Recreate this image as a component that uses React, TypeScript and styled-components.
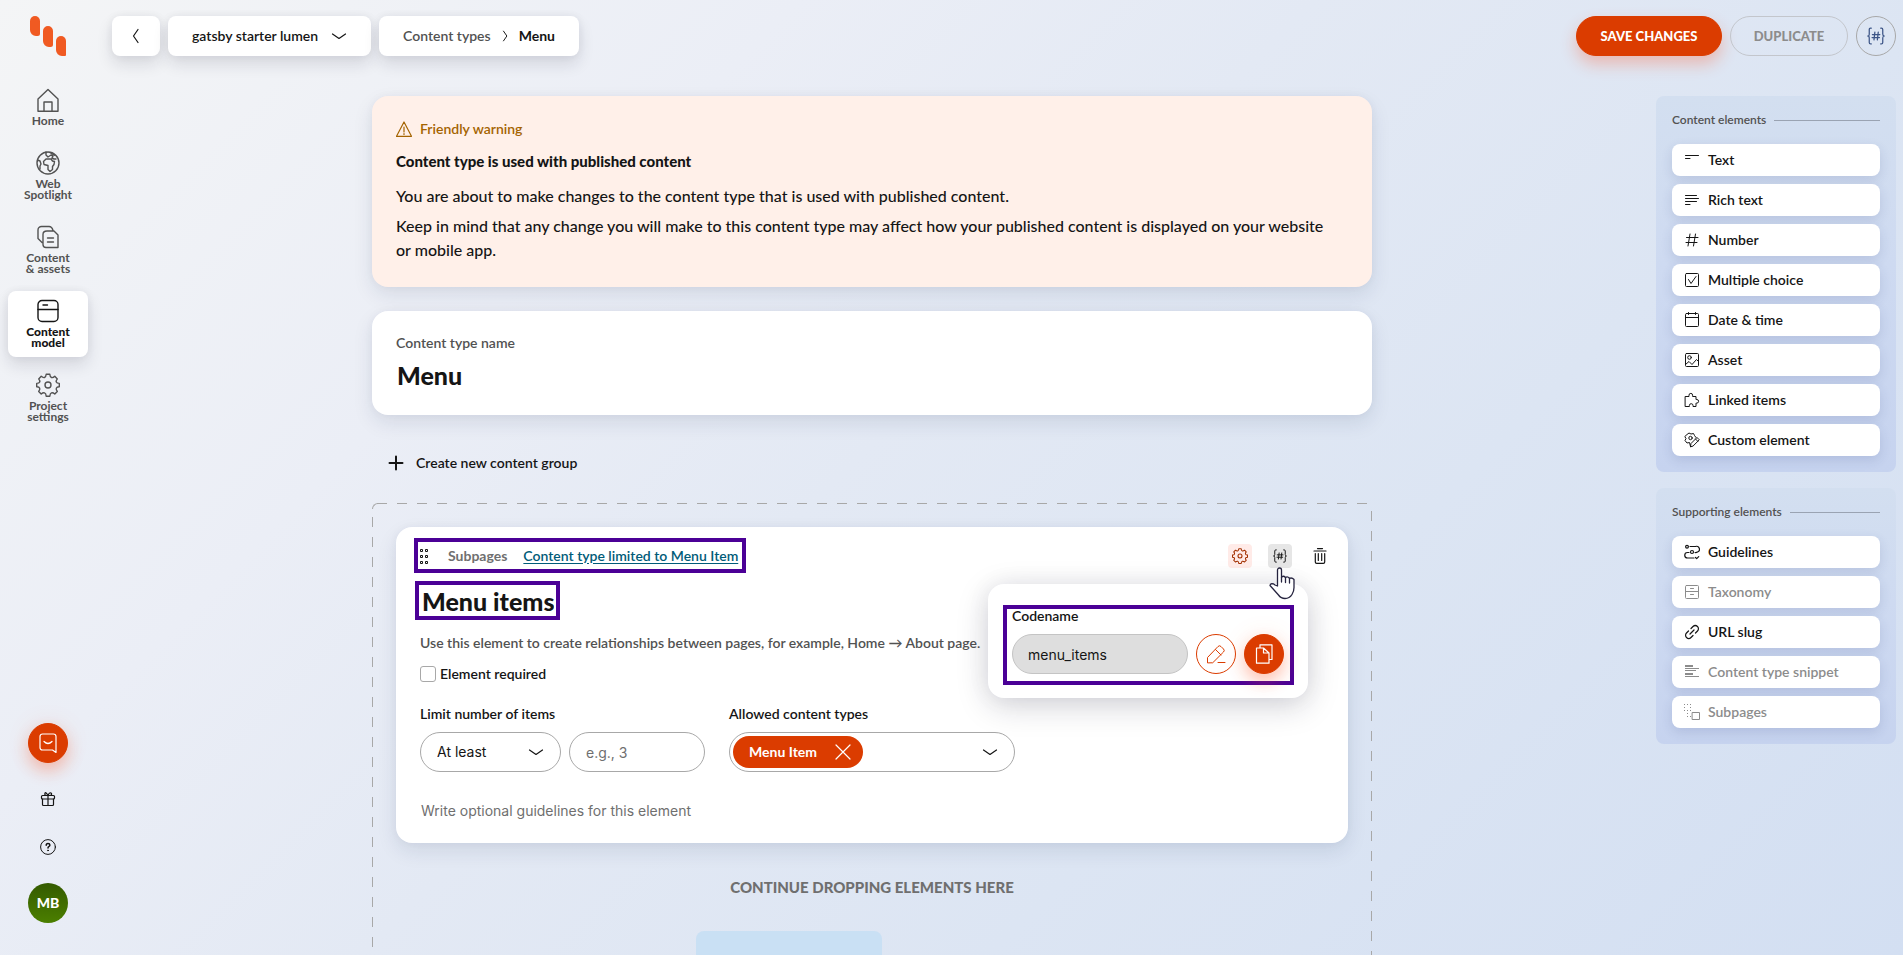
import React from 'react';
import styled, { createGlobalStyle, css } from 'styled-components';

const brand = "Lato, 'Liberation Sans', sans-serif";
const plain = "Inter, 'Liberation Sans', sans-serif";
const ink = '#151515';
const muted = '#525252';
const faint = '#8c8c8c';
const orange = '#db3c00';
const line = '#a8a8a8';
const purple = '#4b0096';

const GlobalStyle = createGlobalStyle`
  *, *::before, *::after { box-sizing: border-box; }
  body { margin: 0; color: ${ink}; font: 600 14px/20px ${brand}; }
  h1, h2, p, ul { margin: 0; padding: 0; }
  ul { list-style: none; }
  button, input, select, textarea { font: inherit; color: inherit; margin: 0; }
  button { cursor: pointer; }
  svg { display: block; flex: none; }
`;

const Page = styled.div`
  display: flex;
  height: 100vh;
  overflow: hidden;
  background: linear-gradient(135deg, #f4f5f6 0%, #ebeef6 28%, #e3e9f4 46%, #dce5f3 68%, #d3dff2 100%);
`;

const Sidebar = styled.nav`
  display: flex;
  flex-direction: column;
  flex: none;
  align-items: center;
  width: 96px;
  padding: 16px 8px 32px;
`;

const NavList = styled.ul`
  display: flex;
  flex-direction: column;
  gap: 8px;
  width: 80px;
  margin: 24px 0 auto;
`;

const NavLink = styled.a<{ $active?: boolean }>`
  display: flex;
  flex-direction: column;
  align-items: center;
  gap: 3px;
  padding: 8px 4px 9px;
  border-radius: 8px;
  color: ${(p) => (p.$active ? ink : muted)};
  font-size: 12px;
  font-weight: ${(p) => (p.$active ? 900 : 700)};
  line-height: 11px;
  text-align: center;
  text-decoration: none;
  white-space: pre-line;
  ${(p) =>
    p.$active &&
    css`
      background: #fff;
      box-shadow: 0 8px 16px rgba(21, 21, 50, 0.12), 0 0 8px rgba(21, 21, 50, 0.06);
    `}
`;

const SideTools = styled.div`
  display: flex;
  flex-direction: column;
  align-items: center;
  gap: 8px;
`;

const RoundButton = styled.button<{ $tone?: 'solid' | 'outline' | 'ghost' | 'code' }>`
  display: flex;
  flex: none;
  align-items: center;
  justify-content: center;
  width: 40px;
  height: 40px;
  padding: 0;
  border: 1px solid transparent;
  border-radius: 20px;
  background: none;
  ${(p) =>
    p.$tone === 'solid' &&
    css`
      border-color: ${orange};
      background: ${orange};
      color: #fff;
      box-shadow: 0 8px 16px rgba(255, 80, 30, 0.3), 0 0 24px rgba(255, 120, 60, 0.1);
    `}
  ${(p) =>
    p.$tone === 'outline' &&
    css`
      border-color: ${orange};
      color: ${orange};
      background: #fff;
    `}
  ${(p) =>
    p.$tone === 'code' &&
    css`
      border-color: ${line};
      color: #3b5486;
    `}
`;

const Avatar = styled.button`
  width: 40px;
  height: 40px;
  margin-top: 8px;
  padding: 0;
  border: 0;
  border-radius: 20px;
  background: linear-gradient(#345a00, #4b7f00);
  color: #fff;
  font-weight: 900;
`;

const ChatSlot = styled.div`
  margin-bottom: 8px;
`;

const Body = styled.div`
  display: flex;
  flex: 1;
  flex-direction: column;
  min-width: 0;
`;

const Header = styled.header`
  display: flex;
  flex: none;
  gap: 8px;
  align-items: center;
  padding: 16px 7px 16px 16px;
`;

const chip = css`
  display: flex;
  align-items: center;
  height: 40px;
  border: 0;
  border-radius: 8px;
  background: #fff;
  box-shadow: 0 8px 16px rgba(21, 21, 50, 0.12), 0 0 8px rgba(21, 21, 50, 0.06);
`;

const BackButton = styled.button`
  ${chip}
  justify-content: center;
  width: 48px;
  padding: 0;
`;

const ProjectButton = styled.button`
  ${chip}
  justify-content: space-between;
  min-width: 203px;
  padding: 0 24px;
`;

const Breadcrumbs = styled.nav`
  ${chip}
  justify-content: space-between;
  min-width: 200px;
  margin-right: auto;
  padding: 0 24px;
  a { color: ${muted}; text-decoration: none; }
  span { font-weight: 700; }
`;

const PillButton = styled.button<{ $primary?: boolean }>`
  height: 40px;
  min-width: ${(p) => (p.$primary ? 146 : 118)}px;
  padding: 0 16px;
  border: 1px solid ${(p) => (p.$primary ? orange : '#c3c6cc')};
  border-radius: 20px;
  background: ${(p) => (p.$primary ? orange : 'transparent')};
  color: ${(p) => (p.$primary ? '#fff' : faint)};
  font-size: 13px;
  font-weight: 900;
  text-transform: uppercase;
  box-shadow: ${(p) => (p.$primary ? '0 8px 16px rgba(255, 80, 30, 0.3)' : 'none')};
`;

const Columns = styled.div`
  display: flex;
  flex: 1;
  min-height: 0;
`;

const Main = styled.main`
  display: flex;
  flex: 1;
  align-items: flex-start;
  justify-content: center;
  min-width: 0;
  padding: 24px 16px 0;
  overflow: hidden auto;
  scrollbar-width: none;
`;

const Content = styled.div`
  display: flex;
  flex: 0 1 1000px;
  flex-direction: column;
  min-width: 0;
`;

const cardShadow = '0 8px 20px rgba(21, 35, 80, 0.1), 0 0 8px rgba(21, 35, 80, 0.04)';

const Warning = styled.section`
  display: flex;
  flex-direction: column;
  padding: 23px 24px 25px;
  border-radius: 16px;
  background: #fff0e9;
  box-shadow: ${cardShadow};
`;

const WarningHead = styled.div`
  display: flex;
  gap: 8px;
  align-items: center;
  color: #a46300;
`;

const WarningTitle = styled.h2`
  margin: 10px 0 11px;
  font-size: 15px;
  font-weight: 900;
  line-height: 24px;
`;

const WarningText = styled.p`
  padding-right: 12px;
  font-size: 16px;
  font-weight: 500;
  line-height: 24px;
  & + & { margin-top: 6px; }
`;

const NameCard = styled.section`
  display: flex;
  flex-direction: column;
  gap: 8px;
  margin-top: 24px;
  padding: 24px;
  border-radius: 16px;
  background: #fff;
  box-shadow: ${cardShadow};
`;

const Label = styled.label<{ $muted?: boolean }>`
  color: ${(p) => (p.$muted ? muted : ink)};
  line-height: 16px;
`;

const TitleInput = styled.input`
  width: 100%;
  height: 32px;
  padding: 0 1px;
  border: 0;
  outline: 0;
  background: none;
  font-size: 25px;
  font-weight: 900;
  line-height: 32px;
`;

const FittedTitle = styled(TitleInput)`
  width: auto;
  height: 31px;
  padding: 0;
  field-sizing: content;
`;

const GroupButton = styled.button`
  display: flex;
  gap: 12px;
  align-items: center;
  align-self: flex-start;
  height: 40px;
  margin: 28px 0 20px;
  padding: 0 16px;
  border: 0;
  background: none;
`;

const dash = (dir: string) =>
  `repeating-linear-gradient(${dir}, ${line} 0 10px, transparent 10px 20px)`;

const DropZone = styled.section`
  position: relative;
  display: flex;
  flex-direction: column;
  align-items: center;
  padding: 24px 24px 0;
  background:
    ${dash('to right')} 5px 0 / 100% 1px no-repeat,
    ${dash('to bottom')} 0 14px / 1px 100% no-repeat,
    ${dash('to bottom')} 100% 8px / 1px 100% no-repeat;
  &::before {
    content: '';
    position: absolute;
    top: 0;
    left: 0;
    width: 6px;
    height: 6px;
    border: solid ${line};
    border-width: 1px 0 0 1px;
    border-radius: 6px 0 0 0;
  }
`;

const ElementCard = styled.article`
  display: flex;
  flex-direction: column;
  align-items: flex-start;
  align-self: stretch;
  padding: 11px 16px 22px 24px;
  border-radius: 16px;
  background: #fff;
  box-shadow: ${cardShadow};
`;

const CardTop = styled.div`
  display: flex;
  align-items: center;
  justify-content: space-between;
  align-self: stretch;
`;

const Highlight = styled.div<{ $shift: number; $pad: string }>`
  display: flex;
  align-items: center;
  margin-left: -${(p) => p.$shift}px;
  padding: ${(p) => p.$pad};
  border: 4px solid ${purple};
`;

const TitleRow = styled.div`
  display: flex;
  margin-top: 8px;
`;

const DragHandle = styled.button`
  display: flex;
  align-items: center;
  height: 27px;
  margin-right: 20px;
  padding: 0;
  border: 0;
  background: none;
  cursor: grab;
`;

const KindName = styled.span`
  margin-right: 16px;
  color: #6f6f6f;
  font-weight: 700;
`;

const LimitLink = styled.a`
  color: #005b78;
  text-underline-offset: 2px;
`;

const Actions = styled.div`
  display: flex;
  gap: 16px;
`;

const ActionSlot = styled.div`
  position: relative;
`;

const ActionButton = styled.button<{ $bg?: string; $color?: string }>`
  display: flex;
  align-items: center;
  justify-content: center;
  width: 24px;
  height: 24px;
  padding: 0;
  border: 0;
  border-radius: 4px;
  background: ${(p) => p.$bg ?? 'none'};
  color: ${(p) => p.$color ?? ink};
`;

const Pointer = styled.svg`
  position: absolute;
  z-index: 3;
  top: 23px;
  left: 1px;
`;

const Popup = styled.div`
  position: absolute;
  z-index: 2;
  top: 40px;
  right: -16px;
  width: 320px;
  padding: 21px 14px 13px 15px;
  border-radius: 16px;
  background: #fff;
  box-shadow: 0 8px 32px rgba(21, 21, 50, 0.18), 0 0 24px rgba(21, 21, 50, 0.06);
`;

const PopupFrame = styled.div`
  display: flex;
  flex-direction: column;
  gap: 11px;
  padding: 0 6px 7px 5px;
  border: 4px solid ${purple};
  label { line-height: 14px; }
`;

const PopupRow = styled.div`
  display: flex;
  gap: 8px;
`;

const CodeInput = styled.input`
  flex: 1;
  min-width: 0;
  height: 40px;
  padding: 2px 15px 0;
  border: 1px solid #c4c4c4;
  border-radius: 20px;
  outline: 0;
  background: #dedede;
  font-family: ${plain};
  font-weight: 400;
`;

const HintText = styled.p`
  margin: 13px 0;
  color: ${muted};
`;

const CheckLabel = styled.label`
  display: flex;
  gap: 4px;
  align-items: center;
  height: 16px;
  input {
    width: 16px;
    height: 16px;
    border: 1px solid ${line};
    border-radius: 3px;
    background: #fff;
    appearance: none;
  }
`;

const Fields = styled.div`
  display: flex;
  gap: 24px;
  margin: 24px 0 29px;
`;

const Field = styled.div`
  display: flex;
  flex-direction: column;
  gap: 10px;
`;

const FieldRow = styled.div`
  display: flex;
  gap: 8px;
`;

const box = css`
  height: 40px;
  border: 1px solid ${line};
  border-radius: 20px;
  outline: 0;
  background: #fff;
`;

const SelectBox = styled.div`
  position: relative;
  svg { position: absolute; top: 12px; right: 17px; pointer-events: none; }
  select {
    ${box}
    width: 141px;
    padding: 0 40px 0 16px;
    font-family: ${plain};
    font-weight: 400;
    appearance: none;
  }
`;

const NumberInput = styled.input`
  ${box}
  width: 136px;
  padding: 0 16px;
  font-family: ${plain};
  font-weight: 400;
  &::placeholder { color: #6f6f6f; }
`;

const MultiSelect = styled.div`
  ${box}
  display: flex;
  align-items: center;
  justify-content: space-between;
  width: 286px;
  padding: 0 16px 0 3px;
`;

const Tag = styled.span`
  display: flex;
  align-items: center;
  justify-content: space-between;
  width: 130px;
  height: 32px;
  padding: 0 12px 0 16px;
  border-radius: 16px;
  background: ${orange};
  color: #fff;
  font-weight: 700;
`;

const IconButton = styled.button`
  display: flex;
  padding: 0;
  border: 0;
  background: none;
`;

const Guidelines = styled.textarea`
  align-self: stretch;
  height: 20px;
  padding: 0 1px;
  border: 0;
  outline: 0;
  background: none;
  font-family: ${plain};
  font-weight: 400;
  resize: none;
  overflow: hidden;
  &::placeholder { color: #6f6f6f; }
`;

const DropHint = styled.p`
  margin: 34px 0;
  color: #6f6f6f;
  font-size: 15px;
  font-weight: 900;
  text-transform: uppercase;
`;

const DropTargets = styled.div`
  display: grid;
  grid-template-columns: 186px 166px;
`;

const DropTarget = styled.div`
  height: 120px;
  border-radius: 8px;
  background: #c9e0f4;
`;

const Aside = styled.aside`
  display: flex;
  flex: none;
  flex-direction: column;
  gap: 16px;
  width: 255px;
  padding: 24px 7px 0 8px;
`;

const Panel = styled.section`
  display: flex;
  flex-direction: column;
  gap: 16px;
  padding: 16px;
  border-radius: 8px;
  background: linear-gradient(#d3dff0, #cedaf1 45%, #c6d3ef);
`;

const PanelTitle = styled.h2`
  display: flex;
  gap: 8px;
  align-items: center;
  color: ${muted};
  font-size: 12px;
  font-weight: 600;
  line-height: 16px;
  &::after { content: ''; flex: 1; height: 1px; background: #9aa3b2; }
`;

const PanelList = styled.ul`
  display: flex;
  flex-direction: column;
  gap: 8px;
`;

const PaletteButton = styled.button`
  display: flex;
  gap: 8px;
  align-items: center;
  width: 100%;
  height: 32px;
  padding: 0 12px;
  border: 0;
  border-radius: 8px;
  background: #fff;
  box-shadow: 0 4px 12px rgba(40, 60, 120, 0.14);
  &:disabled { color: ${faint}; }
`;

type Glyph = { d?: string; fill?: string; size?: number; box?: number; weight?: number; children?: React.ReactNode };

const Icon = ({ d, fill, size = 16, box: vb = 16, weight = 1, children }: Glyph) => (
  <svg
    width={size}
    height={size}
    viewBox={`0 0 ${vb} ${vb}`}
    fill="none"
    stroke="currentColor"
    strokeWidth={weight}
    strokeLinecap="round"
    strokeLinejoin="round"
    aria-hidden="true"
  >
    {d && <path d={d} />}
    {fill && <path d={fill} fill="currentColor" stroke="none" />}
    {children}
  </svg>
);

const gearPath =
  'M10.2 1.200h3.600q.2 2.800 1.700 3.300t3.300-1.200l2.500 2.600q-1.500 1.900-1 3.200t3 1.300v3.400q-2.500.1-3 1.400t1 3.200l-2.500 2.600q-1.900-1.600-3.300-1.100t-1.700 3.300h-3.600q-.2-2.800-1.700-3.300t-3.300 1.100l-2.500-2.600q1.500-1.900 1-3.200t-3-1.400v-3.400q2.500 0 3-1.300t-1-3.200l2.500-2.600q1.900 1.700 3.300 1.200t1.700-3.300z';

const Gear = ({ size = 24, weight = 1.4 }: { size?: number; weight?: number }) => (
  <Icon size={size} box={24} weight={weight} d={gearPath}>
    <circle cx="12" cy="12" r="3" />
  </Icon>
);

const Braces = ({ size = 16 }: { size?: number }) => (
  <Icon
    size={size}
    weight={1.1}
    d="M3.8 1h-.6q-1.2 0-1.2 1.3v4Q2 8 .6 8 2 8 2 9.700v4Q2 15 3.200 15h.6M12.200 1h.6q1.200 0 1.200 1.300v4Q14 8 15.400 8 14 8 14 9.700v4q0 1.300-1.200 1.300h-.6M7 4.500l-.8 7M10 4.500l-.8 7M4.800 6.700h6.600M4.500 9.400h6.600"
  />
);

const Chevron = () => <Icon d="M1.500 6 8 10.500 14.500 6" weight={1.200} />;

const Logo = () => (
  <svg width="36" height="40" viewBox="0 0 36 40" fill="#f05a22" role="img" aria-label="Kontent">
    <path d="M0 5a5 5 0 0 1 10 0v12.500a2.500 2.500 0 0 1-2.500 2.500H6a6 6 0 0 1-6-6z" />
    <path d="M13 15a5 5 0 0 1 10 0v13.500a2.500 2.500 0 0 1-2.500 2.500H19a6 6 0 0 1-6-6z" />
    <path d="M26 25a5 5 0 0 1 10 0v14a1 1 0 0 1-1 1h-3a6 6 0 0 1-6-6z" />
  </svg>
);

const navItems = [
  {
    label: 'Home',
    icon: <Icon size={24} box={24} weight={1.400} d="M2 23.200V11L12 1.500 22 11v12.200zM8 23.200V14h8v9.200" />,
  },
  {
    label: 'Web\nSpotlight',
    icon: (
      <Icon
        size={24}
        box={24}
        weight={1.400}
        d="M10 1v3l2 2 3-2 2 1-1 2 2 1h2M1.500 9l2.500 1 1 3-1 2v3M10 8h5l1.500 2 2 .5-.5 3-1.500 2v3L14 20.500l-2-2v-4l-4-1-.5-3zM14 1.500l5 3"
      >
        <circle cx="12" cy="12" r="11" />
      </Icon>
    ),
  },
  {
    label: 'Content\n& assets',
    icon: (
      <Icon
        size={24}
        box={24}
        weight={1.400}
        d="M7 17.500H6l-4-4V5a3.500 3.500 0 0 1 3.500-3.500H13q3 0 4 4M11 6h7l4 4v12.500H10a3 3 0 0 1-3-3V9.500Q7 6 11 6zM11.500 13h6M11.500 17h6"
      />
    ),
  },
  {
    label: 'Content\nmodel',
    active: true,
    icon: (
      <Icon size={24} box={24} weight={1.400} d="M2 10.500h20M7 6h4.500">
        <rect x="2" y="1.500" width="20" height="21" rx="4" />
      </Icon>
    ),
  },
  { label: 'Project\nsettings', icon: <Gear /> },
];

const contentElements = [
  { label: 'Text', icon: <Icon d="M1.500 3.500h13M1.500 6.500h4.500" /> },
  { label: 'Rich text', icon: <Icon d="M1.500 3.500h11M1.500 6.500h13M1.500 9.500h11M1.500 12.500h4.500" /> },
  { label: 'Number', icon: <Icon d="M6 2 4 14M11.500 2l-2 12M2.500 5.500h11.500M2 10.500h11" /> },
  {
    label: 'Multiple choice',
    icon: (
      <Icon d="M4.500 7.500 7 11.500 12 4.500">
        <rect x="1.500" y="1.500" width="13" height="13" rx="1" />
      </Icon>
    ),
  },
  {
    label: 'Date & time',
    icon: (
      <Icon d="M1.500 5.500h13M4.500 .5v2M11.500 .5v2">
        <rect x="1.500" y="1.500" width="13" height="13" rx="1" />
      </Icon>
    ),
  },
  {
    label: 'Asset',
    icon: (
      <Icon d="M1.500 12.500 5 9.500l3 3 4.500-5 2 2">
        <rect x="1.500" y="1.500" width="13" height="13" rx="1" />
        <circle cx="5.500" cy="5.500" r="1.800" />
      </Icon>
    ),
  },
  {
    label: 'Linked items',
    icon: (
      <Icon d="M1.500 4.500H5V3.200a1.800 1.800 0 0 1 3.600 0v1.300H12V7.500h.8a1.800 1.800 0 0 1 0 3.600H12v3.400H9v-1a1.800 1.800 0 0 0-3.600 0v1H1.500z" />
    ),
  },
  {
    label: 'Custom element',
    icon: (
      <Icon d="M6.500 14.500 5.500 10.500 3 11 1 8.500 2 6.500.8 4.500 3 2.500 5 1l2 1 2.500-.5 1 2L12 5.500M6.500 14.500 7 11.500 13 5.500l2.300 2.300-6 6zM11.500 7l2.300 2.300">
        <circle cx="6.500" cy="6" r="1.700" />
      </Icon>
    ),
  },
];

const supportingElements = [
  {
    label: 'Guidelines',
    icon: (
      <Icon weight={1.200} d="M6 2.500h5.500a2.700 2.700 0 0 1 2 5.500q-1 .7-2.500.5M5 8.500H3.500a2.500 2.500 0 0 0 0 5.500H10M11.500 13.500l1.200 1.200 2-2">
        <circle cx="3" cy="2.800" r="1.400" />
        <circle cx="8" cy="8" r="1.500" />
      </Icon>
    ),
  },
  {
    label: 'Taxonomy',
    off: true,
    icon: (
      <Icon d="M1.500 7.500h13M6.500 4.500h3M6.500 10.500h3">
        <rect x="1.500" y="1.500" width="13" height="13" rx="1" />
      </Icon>
    ),
  },
  {
    label: 'URL slug',
    icon: (
      <Icon weight={1.200} d="M6 10l4-4M7 4.500 9 2.500a3 3 0 0 1 4.500 4.500L11.500 9M9 11.500l-2 2A3 3 0 0 1 2.500 9L4.500 7" />
    ),
  },
  {
    label: 'Content type snippet',
    off: true,
    icon: <Icon fill="M1 1h8v2H1zM1 4h14v1H1zM1 6h11v1H1zM1 9h8v2H1zM1 12h14v1H1z" />,
  },
  {
    label: 'Subpages',
    off: true,
    icon: (
      <Icon fill="M0 0h1v1H0zM3 0h1v1H3zM6 0h1v1H6zM0 3h1v1H0zM6 3h1v1H6zM0 6h1v1H0zM3 6h1v1H3zM6 6h1v1H6zM3 9h1v1H3zM6 12h1v1H6zM3 12h1v1H3z">
        <rect x="8.500" y="8.500" width="7" height="7" />
      </Icon>
    ),
  },
];

type Item = { label: string; icon: React.ReactNode; off?: boolean };

const Palette = ({ title, items }: { title: string; items: Item[] }) => (
  <Panel>
    <PanelTitle>{title}</PanelTitle>
    <PanelList>
      {items.map((item) => (
        <li key={item.label}>
          <PaletteButton disabled={item.off}>
            {item.icon}
            {item.label}
          </PaletteButton>
        </li>
      ))}
    </PanelList>
  </Panel>
);

const App = () => (
  <>
    <GlobalStyle />
    <Page>
      <Sidebar aria-label="Main">
        <Logo />
        <NavList>
          {navItems.map((item) => (
            <li key={item.label}>
              <NavLink href="#" $active={item.active}>
                {item.icon}
                {item.label}
              </NavLink>
            </li>
          ))}
        </NavList>
        <SideTools>
          <ChatSlot>
            <RoundButton $tone="solid" aria-label="Chat">
              <Icon size={20} box={20} weight={1.200} d="M18 19.500 14.500 17H4.500a2.500 2.500 0 0 1-2.500-2.500v-11A2.500 2.500 0 0 1 4.500 1h11A2.500 2.500 0 0 1 18 3.500zM6 8.500q4 4 8 0" />
            </RoundButton>
          </ChatSlot>
          <RoundButton aria-label="What's new">
            <Icon weight={1.200} d="M2.500 8v5.500q0 1 1 1h9q1 0 1-1V8M8 4.500v10M8 4.500H5.500Q4.300 3.200 5 2T8 4.500Q9.500 1 11 2t-.5 2.500z">
              <rect x="1.500" y="4.500" width="13" height="3.500" rx="1" />
            </Icon>
          </RoundButton>
          <RoundButton aria-label="Help">
            <Icon d="M6.200 6.300q0-1.900 1.800-1.900t1.900 1.700q0 1-1.100 1.500-.8.400-.8 1.300" weight={1.500}>
              <circle cx="8" cy="8" r="7.400" strokeWidth="1" />
              <circle cx="8" cy="11.400" r=".5" fill="currentColor" strokeWidth=".8" />
            </Icon>
          </RoundButton>
          <Avatar>MB</Avatar>
        </SideTools>
      </Sidebar>
      <Body>
        <Header>
          <BackButton aria-label="Back">
            <Icon weight={1.200} d="M10 1.500 5.500 8l4.500 6.500" />
          </BackButton>
          <ProjectButton>
            gatsby starter lumen
            <Chevron />
          </ProjectButton>
          <Breadcrumbs aria-label="Breadcrumb">
            <a href="#">Content types</a>
            <Icon size={12} weight={1.300} d="M6 1.500 10.500 8 6 14.500" />
            <span>Menu</span>
          </Breadcrumbs>
          <PillButton $primary>Save changes</PillButton>
          <PillButton disabled>Duplicate</PillButton>
          <RoundButton $tone="code" aria-label="Codename">
            <Braces size={18} />
          </RoundButton>
        </Header>
        <Columns>
          <Main>
            <Content>
              <Warning>
                <WarningHead>
                  <Icon d="M8 1 15.500 15.300H.5zM8 6v5M8 12.500v1" weight={1.200} />
                  Friendly warning
                </WarningHead>
                <WarningTitle>Content type is used with published content</WarningTitle>
                <WarningText>
                  You are about to make changes to the content type that is used with published content.
                </WarningText>
                <WarningText>
                  Keep in mind that any change you will make to this content type may affect how your published
                  content is displayed on your website or mobile app.
                </WarningText>
              </Warning>
              <NameCard>
                <Label htmlFor="type-name" $muted>Content type name</Label>
                <TitleInput id="type-name" defaultValue="Menu" />
              </NameCard>
              <GroupButton>
                <Icon d="M8 1.500v13M1.500 8h13" weight={2} />
                Create new content group
              </GroupButton>
              <DropZone>
                <ElementCard>
                  <CardTop>
                    <Highlight $shift={6} $pad="0 4px 0 2px">
                      <DragHandle aria-label="Move element">
                        <svg width="8" height="16" viewBox="0 0 8 16" fill="none" stroke="#151515">
                          <path d="M.5 1.500h2v2h-2zM5.500 1.500h2v2h-2zM.5 7.500h2v2h-2zM5.500 7.500h2v2h-2zM.5 13.500h2v2h-2zM5.500 13.500h2v2h-2z" />
                        </svg>
                      </DragHandle>
                      <KindName>Subpages</KindName>
                      <LimitLink href="#">Content type limited to Menu Item</LimitLink>
                    </Highlight>
                    <Actions>
                      <ActionButton aria-label="Settings" $bg="#ffebe8" $color="#a33000">
                        <Gear size={16} weight={1.600} />
                      </ActionButton>
                      <ActionSlot>
                        <ActionButton aria-label="Show codename" $bg="#e6e6e6">
                          <Braces size={14} />
                        </ActionButton>
                        <Popup>
                          <PopupFrame>
                            <Label htmlFor="codename">Codename</Label>
                            <PopupRow>
                              <CodeInput id="codename" readOnly value="menu_items" />
                              <RoundButton $tone="outline" aria-label="Edit codename">
                                <Icon size={20} box={20} d="M1.500 18.500V13.500L12 2.500Q13.500 1 15 2.500L17.500 5Q19 6.500 17.500 8L7 18.500zM9.500 5.500l5.500 5.500M12 18.500h7" />
                              </RoundButton>
                              <RoundButton $tone="solid" aria-label="Copy codename">
                                <Icon size={20} box={20} weight={1.200} d="M6 3.500V.8h12v14.700h-3M2.500 4H9.500l5.500 5v10.200H2.500zM9.500 4v5H15" />
                              </RoundButton>
                            </PopupRow>
                          </PopupFrame>
                        </Popup>
                        <Pointer width="26" height="33" viewBox="0 0 26 33" fill="#fff" stroke="#26243f" strokeWidth="1.300" strokeLinejoin="round" strokeLinecap="round" aria-hidden="true">
                          <path d="M8.500 19V3a2 2 0 0 1 4 0v7.500q1.500-2.500 4 0 2-1.500 4 .8 2.500-1 4.500 1.200V20.500q0 4-2 7-2.500 4-7 4-4 0-6.500-3.500L1 18.500q0-1.500 2-1.800 1.500 0 3 1.300z" />
                          <path d="M12.500 10.500v4.500M16.500 10.500v5M20.500 11.300V16" fill="none" />
                        </Pointer>
                      </ActionSlot>
                      <ActionButton aria-label="Delete">
                        <Icon d="M5.500 .6h5M2 3h12M3.300 5.500v8.500q0 1.400 1.400 1.400h6.600q1.400 0 1.400-1.400V5.500M6.300 5.500v7M9.700 5.500v7" weight={1.200} />
                      </ActionButton>
                    </Actions>
                  </CardTop>
                  <TitleRow>
                    <Highlight $shift={5} $pad="0 2px 0 3px">
                      <FittedTitle aria-label="Element name" defaultValue="Menu items" />
                    </Highlight>
                  </TitleRow>
                  <HintText>
                    Use this element to create relationships between pages, for example, Home → About page.
                  </HintText>
                  <CheckLabel>
                    <input type="checkbox" />
                    Element required
                  </CheckLabel>
                  <Fields>
                    <Field>
                      <Label htmlFor="limit">Limit number of items</Label>
                      <FieldRow>
                        <SelectBox>
                          <select id="limit" defaultValue="At least">
                            <option>At least</option>
                            <option>At most</option>
                            <option>Exactly</option>
                          </select>
                          <Chevron />
                        </SelectBox>
                        <NumberInput aria-label="Number of items" placeholder="e.g., 3" />
                      </FieldRow>
                    </Field>
                    <Field>
                      <Label as="span">Allowed content types</Label>
                      <MultiSelect>
                        <Tag>
                          Menu Item
                          <IconButton aria-label="Remove Menu Item">
                            <Icon d="M1 1l14 14M15 1 1 15" weight={1.200} />
                          </IconButton>
                        </Tag>
                        <IconButton aria-label="Open content types">
                          <Chevron />
                        </IconButton>
                      </MultiSelect>
                    </Field>
                  </Fields>
                  <Guidelines aria-label="Guidelines" placeholder="Write optional guidelines for this element" />
                </ElementCard>
                <DropHint>Continue dropping elements here</DropHint>
                <DropTargets>
                  <DropTarget />
                </DropTargets>
              </DropZone>
            </Content>
          </Main>
          <Aside>
            <Palette title="Content elements" items={contentElements} />
            <Palette title="Supporting elements" items={supportingElements} />
          </Aside>
        </Columns>
      </Body>
    </Page>
  </>
);

export default App;
